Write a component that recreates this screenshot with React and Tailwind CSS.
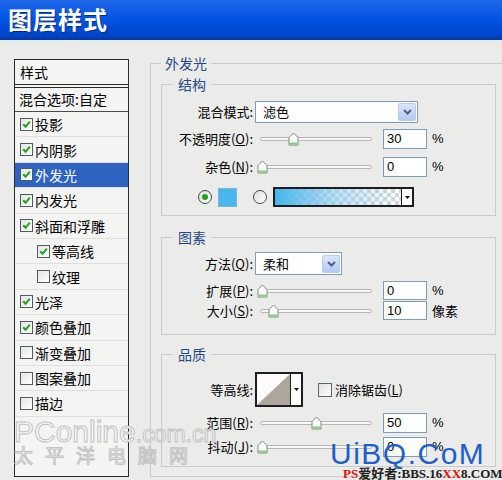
import React from 'react';

const cjk = "font-['Noto_Sans_CJK_SC',sans-serif]";
const num = "font-['Liberation_Sans',sans-serif]";

const styleItems = [
  { label: '投影', checked: true },
  { label: '内阴影', checked: true },
  { label: '外发光', checked: true, active: true },
  { label: '内发光', checked: true },
  { label: '斜面和浮雕', checked: true },
  { label: '等高线', checked: true, sub: true },
  { label: '纹理', checked: false, sub: true },
  { label: '光泽', checked: true },
  { label: '颜色叠加', checked: true },
  { label: '渐变叠加', checked: false },
  { label: '图案叠加', checked: false },
  { label: '描边', checked: false },
];

const Check = ({ checked }) => (
  <span className="w-[13px] h-[13px] shrink-0 border border-[#4d5b6b] bg-gradient-to-br from-[#e4e4e0] to-white flex items-center justify-center">
    {checked && (
      <svg width="9" height="9" viewBox="0 0 9 9">
        <path d="M1.2 4.2 L3.6 6.8 L7.8 1.6" stroke="#21a121" strokeWidth="2" fill="none" />
      </svg>
    )}
  </span>
);

const Radio = ({ checked }) => (
  <span className="w-[14px] h-[14px] shrink-0 rounded-full border border-[#3d4a5a] bg-gradient-to-br from-[#dcdcd8] to-white flex items-center justify-center">
    {checked && <span className="w-[6px] h-[6px] rounded-full bg-[#21a121]" />}
  </span>
);

const Chevron = () => (
  <svg width="9" height="6" viewBox="0 0 9 6">
    <path d="M1 1 L4.5 4.5 L8 1" stroke="#4d6185" strokeWidth="2" fill="none" />
  </svg>
);

const Select = ({ value, width, height }) => (
  <div className={`${width} ${height} border border-[#7f9db9] bg-white flex items-center justify-between pl-[7px]`}>
    <span className="text-[13px] leading-[16px]">{value}</span>
    <span className="w-[18px] h-[18px] mr-[1px] rounded-[2px] border border-[#b9ccf0] bg-gradient-to-b from-[#dbe6fc] to-[#b3c8f3] flex items-center justify-center">
      <Chevron />
    </span>
  </div>
);

const Slider = ({ pos }) => (
  <div className="relative w-[118px] h-full ml-[2px] flex items-center">
    <div className="mx-[3px] w-full h-[4px] rounded-full border border-[#b9b9b4] bg-[#f6f6f4]" />
    <svg className="absolute top-[3px]" style={{ left: pos }} width="11" height="14" viewBox="0 0 11 14">
      <path d="M1 13 V5.5 L5.5 1 L10 5.5 V13 Z" fill="#ffffff" stroke="#7d8a7d" strokeWidth="1" />
      <path d="M1.5 10.5 H9.5 V12.5 H1.5 Z" fill="#7fcf7f" />
    </svg>
  </div>
);

const Field = ({ value, unit }) => (
  <>
    <div className={`ml-[8px] w-[44px] h-full border border-[#7f9db9] bg-white pl-[3px] flex items-center text-[13px] ${num}`}>
      {value}
    </div>
    <span className={`ml-[5px] text-[13px] ${unit === '%' ? num : ''}`}>{unit}</span>
  </>
);

const Label = ({ children }) => (
  <div className="w-[93px] pr-[2px] text-right text-[13px] leading-[16px] whitespace-nowrap">{children}</div>
);

const SliderRow = ({ label, hot, rest, pos, value, unit, className }) => (
  <div className={`flex items-center ${className}`}>
    <Label>
      {label}(<u>{hot}</u>){rest}:
    </Label>
    <Slider pos={pos} />
    <Field value={value} unit={unit} />
  </div>
);

const Legend = ({ children, outer }) => (
  <legend className={`${outer ? 'ml-0 px-[4px]' : 'ml-[11px] px-[5px]'} text-[14px] leading-[20px] text-[#1f4a8a]`}>
    {children}
  </legend>
);

const StylesPanel = () => (
  <div className="mt-[17px] ml-[14px] w-[115px] h-[418px] border border-[#2a2a2a] bg-[#f4f4f3] text-[14px] text-black shrink-0">
    <div className="h-[25px] pl-[5px] flex items-center border-b border-[#2a2a2a]">样式</div>
    <div className="h-[2px] border-b border-[#2a2a2a] mt-[1px]" />
    <div className="h-[24px] pl-[4px] flex items-center border-b border-[#4a4a4a] whitespace-nowrap">混合选项:自定</div>
    {styleItems.map((item) => (
      <div
        key={item.label}
        className={`h-[25.4px] flex items-center gap-[2px] border-b border-[#dfdfdc] whitespace-nowrap ${
          item.sub ? 'pl-[22px]' : 'pl-[5px]'
        } ${item.active ? 'bg-[#2f63c1] text-white' : ''}`}
      >
        <Check checked={item.checked} />
        <span className="leading-[18px]">{item.label}</span>
      </div>
    ))}
  </div>
);

const OuterGlowPanel = () => (
  <fieldset className="mt-[11px] ml-[21px] w-[356px] h-[424px] border border-[#cbcbc8] pl-[10px] shrink-0">
    <Legend outer>外发光</Legend>

    <fieldset className="mt-[1px] w-[335px] border border-[#cbcbc8] pb-[8px]">
      <Legend>结构</Legend>
      <div className="mt-[7px] h-[22px] flex items-center">
        <Label>混合模式:</Label>
        <Select value="滤色" width="w-[163px]" height="h-[22px]" />
      </div>
      <SliderRow className="mt-[6px] h-[20px]" label="不透明度" hot="O" pos={30.5} value="30" unit="%" />
      <SliderRow className="mt-[8px] h-[20px]" label="杂色" hot="N" pos={0} value="0" unit="%" />
      <div className="mt-[10px] h-[20px] flex items-center pl-[36px]">
        <Radio checked />
        <span className="ml-[6px] w-[19px] h-[19px] bg-[#47b7ee] border border-[#7fb3d4]" />
        <span className="ml-[16px]">
          <Radio />
        </span>
        <div className="ml-[6px] w-[141px] h-[20px] border-2 border-[#1e1e1e] flex">
          <div className="flex-1 bg-[repeating-conic-gradient(#d4d4d4_0_25%,#ffffff_0_50%)] bg-[length:8px_8px]">
            <div className="w-full h-full bg-gradient-to-r from-[#45b5ee] via-[#8fd0f3]/60 to-transparent" />
          </div>
          <div className="w-[11px] border-l border-[#1e1e1e] bg-white flex items-center justify-center">
            <svg width="5" height="3" viewBox="0 0 5 3">
              <path d="M0 0 H5 L2.5 3 Z" fill="#111" />
            </svg>
          </div>
        </div>
      </div>
    </fieldset>

    <fieldset className="mt-[11px] w-[335px] border border-[#cbcbc8] pb-[14px]">
      <Legend>图素</Legend>
      <div className="mt-[5px] h-[23px] flex items-center">
        <Label>
          方法(<u>Q</u>):
        </Label>
        <Select value="柔和" width="w-[87px]" height="h-[23px]" />
      </div>
      <SliderRow className="mt-[6px] h-[19px]" label="扩展" hot="P" pos={0} value="0" unit="%" />
      <SliderRow className="mt-[1px] h-[19px]" label="大小" hot="S" pos={10.5} value="10" unit="像素" />
    </fieldset>

    <fieldset className="mt-[9px] w-[335px] border border-[#cbcbc8] pb-[9px]">
      <Legend>品质</Legend>
      <div className="mt-[8px] h-[35px] flex items-center">
        <Label>等高线:</Label>
        <div className="w-[48px] h-[35px] border-2 border-[#1e1e1e] flex">
          <svg className="flex-1 h-full" viewBox="0 0 34 31" preserveAspectRatio="none">
            <rect width="34" height="31" fill="#fdfcfa" />
            <path d="M0 31 L34 0 V31 Z" fill="#aca69c" />
          </svg>
          <div className="w-[11px] border-l border-[#1e1e1e] bg-white flex items-center justify-center">
            <svg width="5" height="3" viewBox="0 0 5 3">
              <path d="M0 0 H5 L2.5 3 Z" fill="#111" />
            </svg>
          </div>
        </div>
        <span className="ml-[15px] w-[14px] h-[14px] border border-[#5a6676] bg-gradient-to-br from-[#e0e0dc] to-white" />
        <span className="ml-[3px] text-[13px] whitespace-nowrap">
          消除锯齿(<u>L</u>)
        </span>
      </div>
      <SliderRow className="mt-[6px] h-[20px]" label="范围" hot="R" pos={53.5} value="50" unit="%" />
      <SliderRow className="mt-[4px] h-[20px]" label="抖动" hot="J" pos={0} value="0" unit="%" />
    </fieldset>
  </fieldset>
);

export default function App() {
  return (
    <div className={`relative w-[502px] h-[480px] overflow-hidden bg-[#ebebe9] text-black ${cjk}`}>
      <div className="h-[40px] bg-gradient-to-b from-[#1f68e8] via-[#0054e4] to-[#0042c4] border-b-2 border-[#0b37a0] flex items-center pl-[8px]">
        <span className="text-white text-[24px] font-bold leading-[28px] tracking-[1px] [text-shadow:1px_1px_0_#0a2a80]">
          图层样式
        </span>
      </div>
      <div className="h-[2px] bg-[#dff0f4]" />

      <div className="flex items-start">
        <StylesPanel />
        <OuterGlowPanel />
      </div>

      {/* watermarks */}
      <div className="absolute left-[14px] top-[416px] whitespace-nowrap text-[#fafafa] [-webkit-text-stroke:1px_#c2c2c2] font-['Liberation_Sans',sans-serif] leading-[32px]">
        <span className="text-[30px]">PConline</span>
        <span className="text-[23px]">.com.cn</span>
      </div>
      <div className="absolute left-[14px] top-[443px] whitespace-nowrap text-[19px] leading-[24px] tracking-[12px] text-[#fafafa] [-webkit-text-stroke:1px_#c2c2c2]">
        太平洋电脑网
      </div>
      <div className="absolute left-[330px] top-[439px] whitespace-nowrap text-[30px] leading-[30px] tracking-[1.5px] text-[#1f5fcc] font-['Liberation_Sans',sans-serif]">
        UiBQ.CoM
      </div>
      <div className="absolute left-[343px] top-[466px] whitespace-nowrap text-[13px] leading-[16px] font-bold text-[#222] font-['Liberation_Serif','Noto_Sans_CJK_SC',serif]">
        <span className="text-[#e01010]">PS</span>爱好者:BBS.16<span className="text-[#e01010]">XX</span>8.COM
      </div>
    </div>
  );
}
